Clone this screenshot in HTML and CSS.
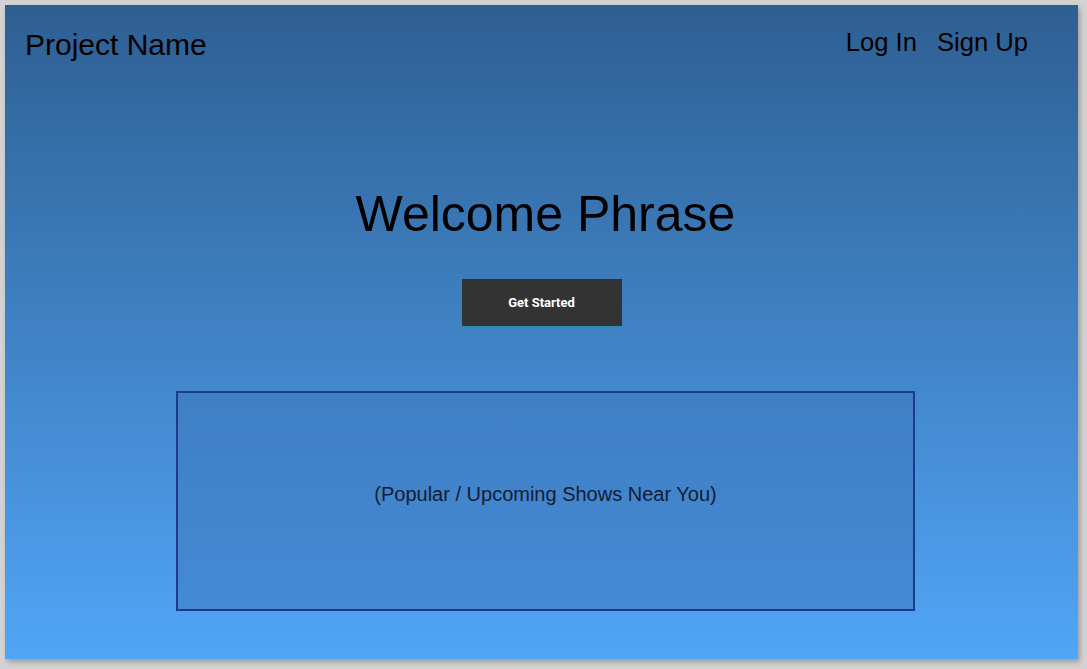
FILE: index.html
```html
<!DOCTYPE html>
<html lang="en">
<head>
<meta charset="utf-8">
<title>Project Name</title>
<link rel="stylesheet" href="styles.css">
</head>
<body>
<div class="frame">
  <header class="topbar">
    <div class="brand">Project Name</div>
    <nav class="nav">
      <a class="nav-link" href="#">Log In</a>
      <a class="nav-link" href="#">Sign Up</a>
    </nav>
  </header>
  <main class="hero">
    <h1 class="title">Welcome Phrase</h1>
    <button class="cta" type="button">Get Started</button>
    <section class="shows">
      <p class="shows-text">(Popular / Upcoming Shows Near You)</p>
    </section>
  </main>
</div>
</body>
</html>
```
FILE: styles.css
```css
html, body {
  margin: 0;
  padding: 0;
}
body {
  background: #d3d3d3;
  font-family: "Liberation Sans", Arial, sans-serif;
  padding: 5px 9px 10px 5px;
  box-sizing: border-box;
  height: 669px;
  overflow: hidden;
}
.frame {
  width: 1073px;
  height: 654px;
  background: linear-gradient(to bottom, #2e5f92 0%, #51a5f7 100%);
  box-shadow: 2px 3px 5px rgba(0, 0, 0, 0.25);
  display: flex;
  flex-direction: column;
}
.topbar {
  display: flex;
  justify-content: space-between;
  align-items: flex-start;
  padding: 0 50px 0 20px;
  height: 80px;
}
.brand {
  font-size: 30px;
  line-height: 34px;
  margin-top: 23px;
  color: #000;
}
.nav {
  display: flex;
  gap: 20px;
  margin-top: 22px;
}
.nav-link {
  font-size: 25.6px;
  line-height: 30px;
  color: #000;
  text-decoration: none;
}
.hero {
  display: flex;
  flex-direction: column;
  align-items: center;
  padding-left: 8px;
}
.title {
  margin: 100px 0 0 0;
  font-size: 50px;
  line-height: 58px;
  font-weight: normal;
  color: #000;
}
.cta {
  margin: 36px 0 0 -8px;
  width: 160px;
  height: 48px;
  background: #333333;
  color: #fff;
  border: none;
  border-bottom: 1px solid #2f8cb6;
  font-family: Roboto, "Liberation Sans", sans-serif;
  font-weight: bold;
  font-size: 13px;
  padding: 0;
}
.shows {
  margin-top: 64px;
  width: 739px;
  height: 220px;
  box-sizing: border-box;
  border: 2px solid #1e3a8a;
  background: rgba(60, 120, 190, 0.55);
  display: flex;
  align-items: center;
  justify-content: center;
}
.shows-text {
  margin: 0 0 14px 0;
  font-size: 20px;
  line-height: 24px;
  color: #121d33;
}
```
